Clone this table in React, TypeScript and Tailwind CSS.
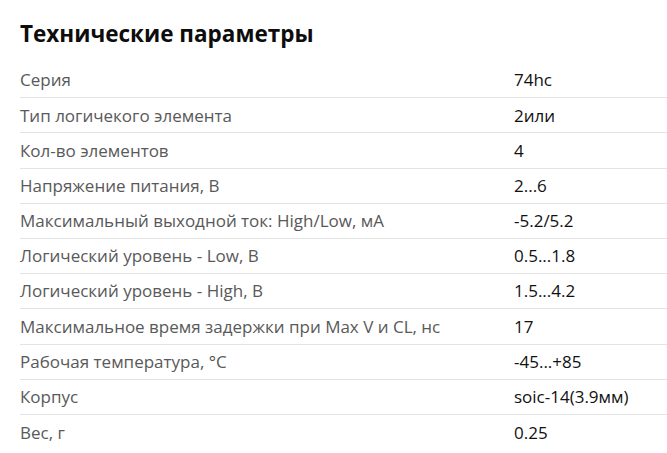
const rows: [string, string][] = [
  ["Серия", "74hc"],
  ["Тип логичекого элемента", "2или"],
  ["Кол-во элементов", "4"],
  ["Напряжение питания, В", "2...6"],
  ["Максимальный выходной ток: High/Low, мА", "-5.2/5.2"],
  ["Логический уровень - Low, В", "0.5...1.8"],
  ["Логический уровень - High, В", "1.5...4.2"],
  ["Максимальное время задержки при Max V и CL, нс", "17"],
  ["Рабочая температура, °C", "-45...+85"],
  ["Корпус", "soic-14(3.9мм)"],
  ["Вес, г", "0.25"],
];

export default function App() {
  return (
    <div className="w-[667px] h-[453px] bg-white pl-5 font-['Open_Sans',sans-serif] overflow-hidden">
      <h2 className="pt-[19px] text-[22.5px] leading-[30px] font-bold text-[#0d0d0d]">Технические параметры</h2>
      <div className="mt-[14px]">
        {rows.map(([k, v], i) => (
          <div
            key={k}
            className={
              "grid grid-cols-[494px_1fr] items-center h-[35.2px] text-[17px] " +
              (i < rows.length - 1 ? "border-b border-[#e3e3e3]" : "")
            }
          >
            <span className="text-[#595959]">{k}</span>
            <span className="text-[#111]">{v}</span>
          </div>
        ))}
      </div>
    </div>
  );
}
